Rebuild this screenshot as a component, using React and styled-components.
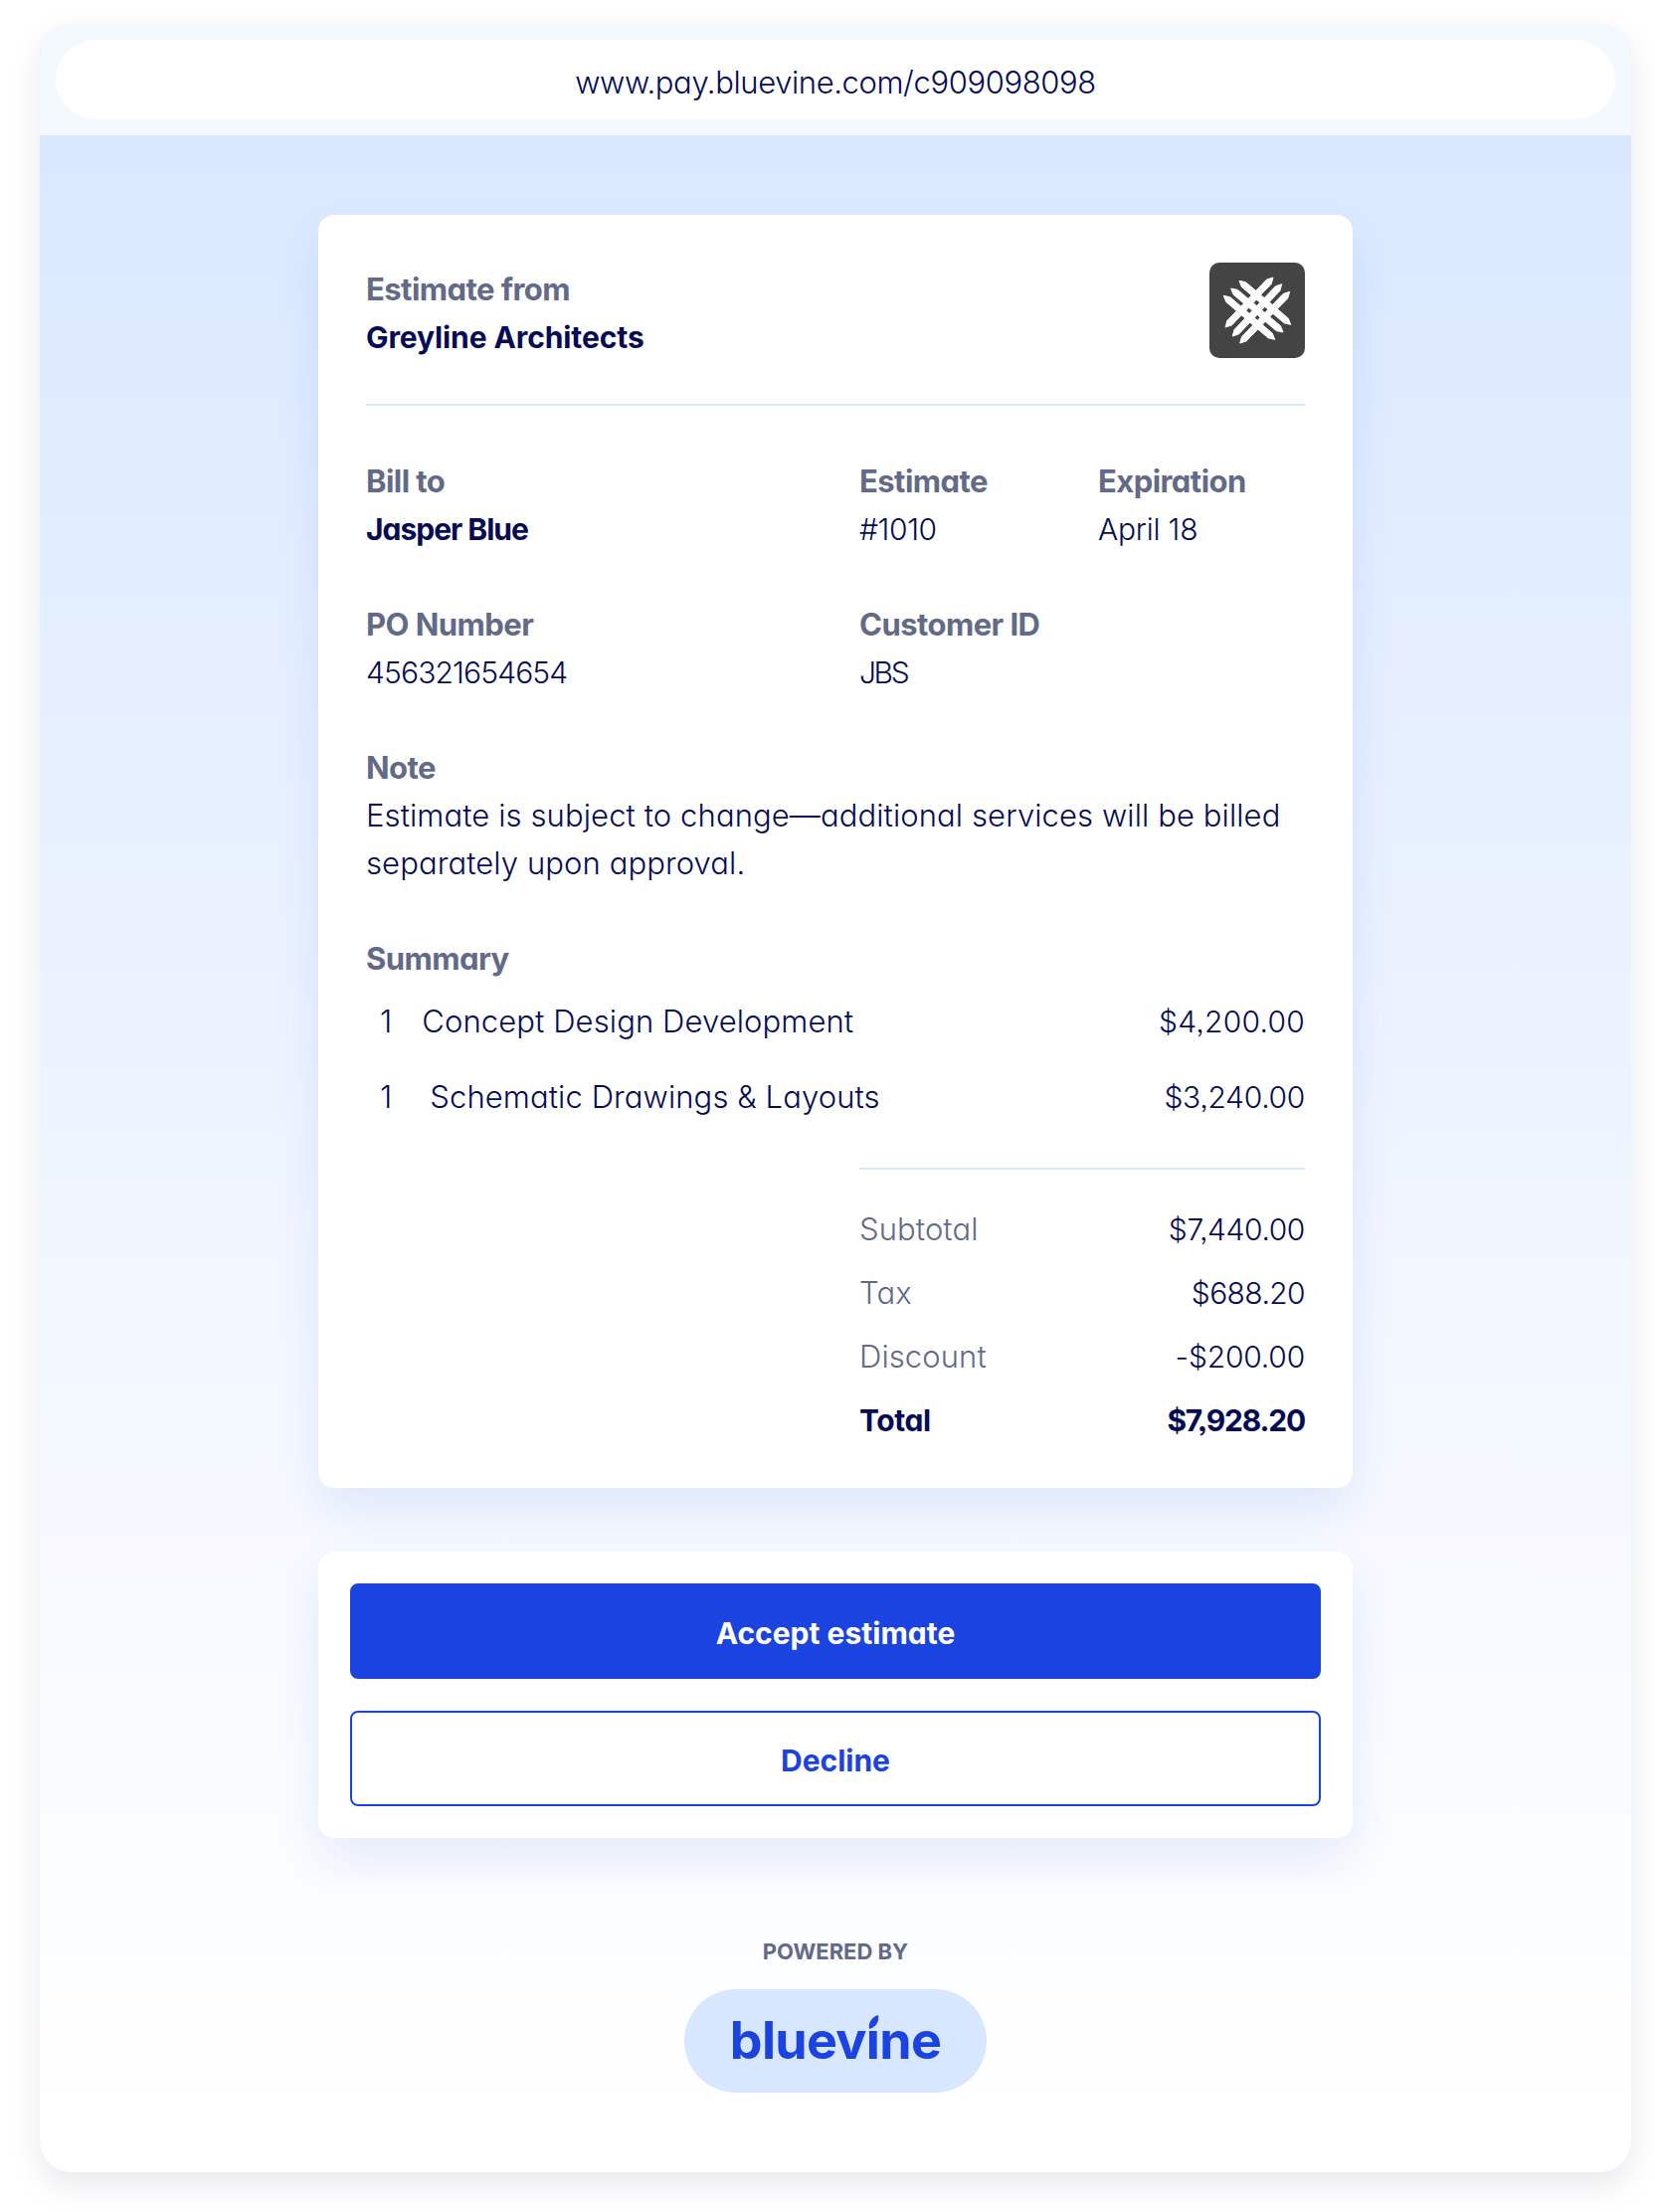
import React from "react";
import styled, { createGlobalStyle } from "styled-components";

const Global = createGlobalStyle`
  html, body {
    margin: 0;
    background: #fff;
  }
  * {
    box-sizing: border-box;
  }
`;

const Page = styled.div`
  width: 1664px;
  height: 2224px;
  padding: 24px 24px 40px 40px;
  font-family: Inter, "Liberation Sans", sans-serif;
  font-feature-settings: "cv11" 1, "ss03" 1;
  font-size: 31px;
  line-height: 48px;
  font-weight: 350;
  letter-spacing: 0.1px;
  color: #060b55;
`;

const FrameShadow = styled.div`
  border-radius: 32px;
  box-shadow: 0 12px 32px rgba(20, 30, 70, 0.1);
`;

const Frame = styled.div`
  width: 1600px;
  height: 2160px;
  border-radius: 32px;
  overflow: hidden;
  display: flex;
  flex-direction: column;
  background: linear-gradient(180deg, #d7e7ff 0%, #f3f7ff 62%, #ffffff 97%);
`;

const UrlBar = styled.div`
  height: 112px;
  padding: 16px;
  background: #f4f8ff;
`;

const UrlPill = styled.div`
  height: 80px;
  padding-top: 5px;
  border-radius: 40px;
  background: #fff;
  display: flex;
  align-items: center;
  justify-content: center;
  letter-spacing: -0.4px;
`;

const Content = styled.div`
  display: flex;
  flex-direction: column;
  align-items: center;
  padding-top: 80px;
`;

const Card = styled.div`
  width: 1040px;
  background: #fff;
  border-radius: 16px;
  box-shadow: 0 24px 48px rgba(27, 67, 224, 0.09);
  padding: ${(p) => p.$pad};
`;

const FromRow = styled.div`
  display: flex;
  justify-content: space-between;
  padding-bottom: 46px;
  border-bottom: 2px solid #d7e7ff;
  margin-bottom: 52px;
`;

const FromText = styled.div`
  margin: 3px 0 -3px;
`;

const Label = styled.div`
  font-weight: 650;
  letter-spacing: -0.55px;
  color: #626a88;
`;

const Strong = styled.div`
  font-size: 30px;
  font-weight: 700;
  letter-spacing: ${(p) => p.$spacing || "-0.1px"};
`;

const Tight = styled.div`
  font-size: 30px;
  letter-spacing: ${(p) => p.$spacing};
`;

const LogoBox = styled.svg`
  width: 96px;
  height: 96px;
  display: block;
`;

const InfoGrid = styled.div`
  display: grid;
  grid-template-columns: 496px 240px 1fr;
  row-gap: 48px;
  margin-bottom: 48px;
`;

const Note = styled.div`
  margin-bottom: 48px;
`;

const Summary = styled.div`
  margin-bottom: 34px;
`;

const Item = styled.div`
  display: flex;
  justify-content: space-between;
  height: 76px;
  padding: 2px 0 0 14px;
  align-items: center;
`;

const ItemName = styled.span`
  margin-left: ${(p) => p.$gap}px;
`;

const Amount = styled.span`
  font-size: 30px;
  letter-spacing: ${(p) => p.$spacing || "-0.6px"};
`;

const Totals = styled.div`
  margin-left: 496px;
  padding-top: 28px;
  border-top: 2px solid #d7e7ff;
`;

const TotalRow = styled.div`
  display: flex;
  justify-content: space-between;
  height: 64px;
  align-items: center;
  font-weight: ${(p) => (p.$bold ? 750 : 350)};
`;

const TotalName = styled.span`
  color: ${(p) => (p.$bold ? "#060b55" : "#626a88")};
  font-weight: ${(p) => (p.$bold ? 750 : 300)};
  letter-spacing: ${(p) => (p.$bold ? "-0.4px" : "0.1px")};
  font-size: ${(p) => (p.$bold ? "30px" : "31px")};
`;

const Actions = styled(Card)`
  margin-top: 64px;
  display: flex;
  flex-direction: column;
  gap: 32px;
`;

const Button = styled.button`
  height: 96px;
  padding-top: 4px;
  border-radius: 8px;
  border: 2px solid #1b43e0;
  background: ${(p) => (p.$primary ? "#1b43e0" : "#fff")};
  color: ${(p) => (p.$primary ? "#fff" : "#1b43e0")};
  font: inherit;
  font-size: 30px;
  font-weight: 700;
  letter-spacing: 0;
`;

const Powered = styled.div`
  margin-top: 98px;
  font-size: 22px;
  line-height: 32px;
  font-weight: 700;
  letter-spacing: 0;
  color: #626a88;
`;

const BrandPill = styled.div`
  margin-top: 22px;
  width: 304px;
  height: 104px;
  border-radius: 52px;
  background: #d7e7ff;
  display: flex;
  align-items: center;
  justify-content: center;
`;

const BrandWord = styled.span`
  font-size: 52px;
  line-height: 60px;
  font-weight: 650;
  letter-spacing: -0.7px;
  color: #1b43e0;
`;

const BrandI = styled.span`
  position: relative;
`;

const Leaf = styled.svg`
  position: absolute;
  left: 0;
  top: 5px;
  width: 13px;
  height: 15px;
  background: #d7e7ff;
`;

// each bar of the lattice, with a blade point at both ends
const blade = ([x0, y0, x1, y1]) => {
  const len = Math.hypot(x1 - x0, y1 - y0);
  const tx = (x1 - x0) / len;
  const ty = (y1 - y0) / len;
  const nx = -ty * 3.2;
  const ny = tx * 3.2;
  const pts = [
    [x0, y0],
    [x0 + tx * 6 + nx, y0 + ty * 6 + ny],
    [x1 - tx * 6 + nx, y1 - ty * 6 + ny],
    [x1, y1],
    [x1 - tx * 6 - nx, y1 - ty * 6 - ny],
    [x0 + tx * 6 - nx, y0 + ty * 6 - ny],
  ];
  return pts.map((p) => p.map((v) => v.toFixed(1)).join(",")).join(" ");
};

const bars = [
  [16, 65, 64, 15],
  [23.3, 74, 72.7, 21.7],
  [30.7, 81, 80.7, 29.3],
  [30, 18.3, 81.7, 62.3],
  [21.7, 26, 74, 70],
  [14.3, 33.3, 65.7, 77.3],
];

const Greyline = () => (
  <LogoBox viewBox="0 0 96 96">
    <rect width="96" height="96" rx="10" fill="#444" />
    {bars.map((b) => (
      <polygon key={b[0]} points={blade(b)} fill="#fff" stroke="#fff" strokeWidth="1" strokeLinejoin="round" />
    ))}
  </LogoBox>
);

export default function App() {
  return (
    <Page>
      <Global />
      <FrameShadow>
        <Frame>
          <UrlBar>
            <UrlPill>www.pay.bluevine.com/c909098098</UrlPill>
          </UrlBar>
          <Content>
            <Card $pad="48px 48px 36px">
              <FromRow>
                <FromText>
                  <Label>Estimate from</Label>
                  <Strong>Greyline Architects</Strong>
                </FromText>
                <Greyline />
              </FromRow>
              <InfoGrid>
                <div>
                  <Label>Bill to</Label>
                  <Strong $spacing="-1px">Jasper Blue</Strong>
                </div>
                <div>
                  <Label>Estimate</Label>
                  <Tight $spacing="-0.4px">#1010</Tight>
                </div>
                <div>
                  <Label>Expiration</Label>
                  <Tight $spacing="-0.2px">April 18</Tight>
                </div>
                <div>
                  <Label>PO Number</Label>
                  <Tight $spacing="-0.85px">456321654654</Tight>
                </div>
                <div>
                  <Label>Customer ID</Label>
                  <Tight $spacing="-2.4px">JBS</Tight>
                </div>
              </InfoGrid>
              <Note>
                <Label>Note</Label>
                <div>
                  Estimate is subject to change—additional services will be billed
                  <br />
                  separately upon approval.
                </div>
              </Note>
              <Summary>
                <Label>Summary</Label>
                <Item>
                  <span>
                    1<ItemName $gap={30}>Concept Design Development</ItemName>
                  </span>
                  <Amount $spacing="0.25px">$4,200.00</Amount>
                </Item>
                <Item>
                  <span>
                    1<ItemName $gap={38}>Schematic Drawings &amp; Layouts</ItemName>
                  </span>
                  <Amount $spacing="-0.3px">$3,240.00</Amount>
                </Item>
              </Summary>
              <Totals>
                <TotalRow>
                  <TotalName>Subtotal</TotalName>
                  <Amount $spacing="-0.4px">$7,440.00</Amount>
                </TotalRow>
                <TotalRow>
                  <TotalName>Tax</TotalName>
                  <Amount>$688.20</Amount>
                </TotalRow>
                <TotalRow>
                  <TotalName>Discount</TotalName>
                  <Amount $spacing="-0.2px">-$200.00</Amount>
                </TotalRow>
                <TotalRow $bold>
                  <TotalName $bold>Total</TotalName>
                  <Amount $spacing="-1.2px">$7,928.20</Amount>
                </TotalRow>
              </Totals>
            </Card>
            <Actions $pad="32px">
              <Button $primary>Accept estimate</Button>
              <Button>Decline</Button>
            </Actions>
            <Powered>POWERED BY</Powered>
            <BrandPill>
              <BrandWord>
                bluev
                <BrandI>
                  i
                  <Leaf viewBox="0 0 13 15">
                    <path d="M3 15C2 9 5 3 12 1C13 8 10 13 3 15Z" fill="#1b43e0" />
                  </Leaf>
                </BrandI>
                ne
              </BrandWord>
            </BrandPill>
          </Content>
        </Frame>
      </FrameShadow>
    </Page>
  );
}
